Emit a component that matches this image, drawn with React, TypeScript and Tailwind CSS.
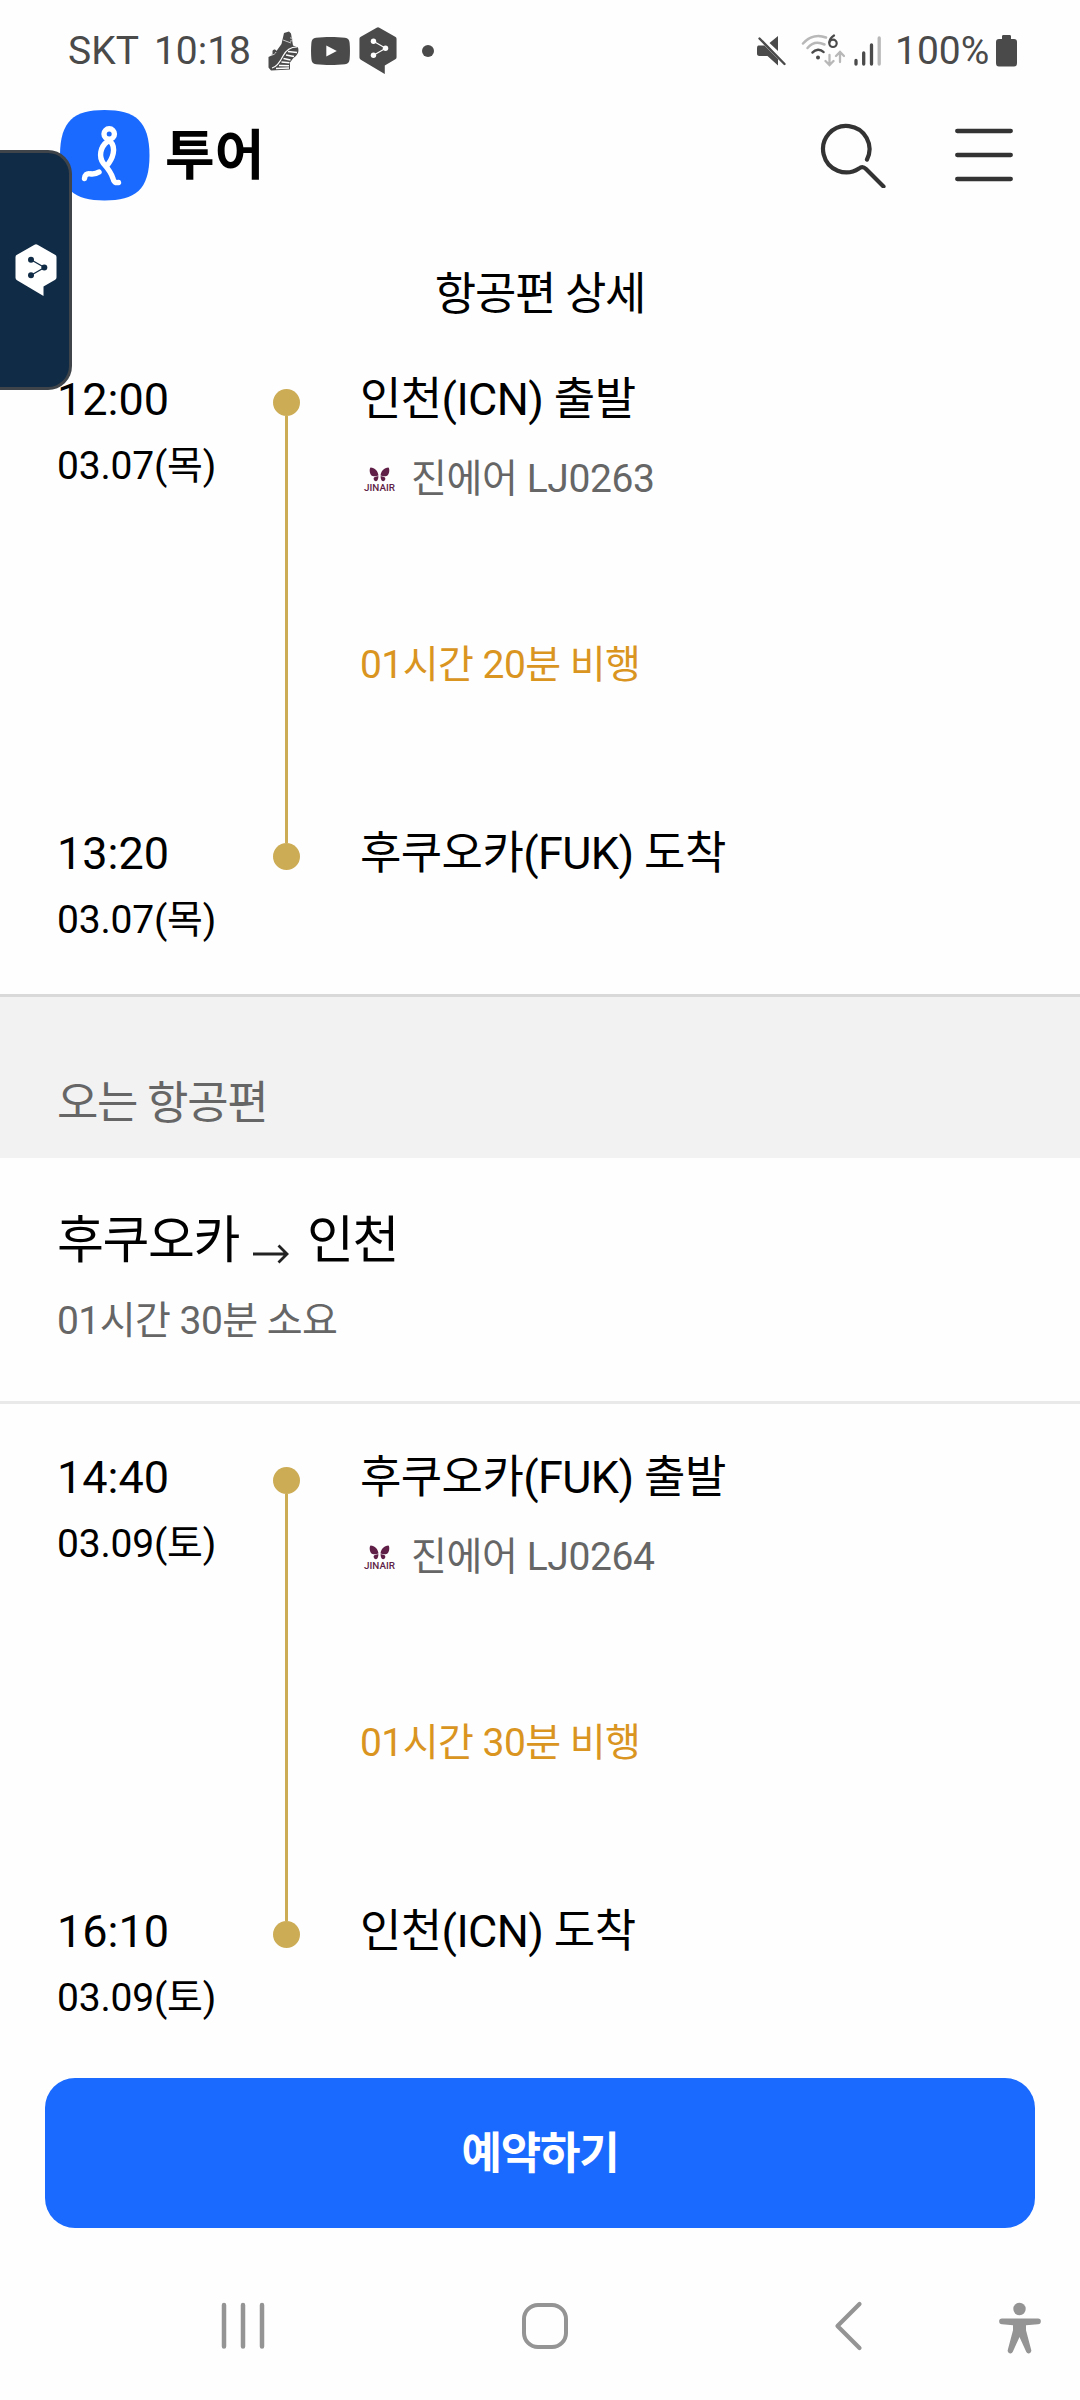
type Stop = {
  time: string;
  date: string;
  place: string;
};

type Leg = {
  departure: Stop;
  arrival: Stop;
  flight: string;
  duration: string;
};

const outbound: Leg = {
  departure: { time: "12:00", date: "03.07(목)", place: "인천(ICN) 출발" },
  arrival: { time: "13:20", date: "03.07(목)", place: "후쿠오카(FUK) 도착" },
  flight: "진에어 LJ0263",
  duration: "01시간 20분 비행",
};

const inbound: Leg = {
  departure: { time: "14:40", date: "03.09(토)", place: "후쿠오카(FUK) 출발" },
  arrival: { time: "16:10", date: "03.09(토)", place: "인천(ICN) 도착" },
  flight: "진에어 LJ0264",
  duration: "01시간 30분 비행",
};

function ShoeIcon() {
  return (
    <svg width="32" height="40" viewBox="0 0 32 40" fill="none">
      <path
        d="M16 2l5-1.500 2 2 1 6 1 6 5 2c1.500 5-1 8-5 11l-3 4v7L3 39.500l-2.500-3V26l4-2v-4c1-2 3-2 4 0l5-7z"
        fill="#4a4a4a"
      />
      <path
        d="M4 37c5-1 8-6 11-12s8-9 14-9"
        stroke="#fefefe"
        strokeWidth="1.200"
      />
      <path
        d="M20 20.500l9 1M18 24l8 1.500M15.500 27.500l7 1.500M13.500 31l8 .800M11 34.500l10 .3M8 37.500l13-.5"
        stroke="#fefefe"
        strokeWidth="1.600"
      />
      <path
        d="M15 9l8 3M3 24c3 0 4-1 5-3M22 7c3-1 3 4 0 3"
        stroke="#c9c9c9"
        strokeWidth="1"
      />
    </svg>
  );
}

function YoutubeIcon() {
  return (
    <svg width="39" height="28" viewBox="0 0 39 28">
      <path
        d="M5 .8C14-.2 25-.2 34 .8c3 .3 4.300 2 4.600 5 .5 5.500.5 11 0 16.500-.3 3-1.600 4.600-4.600 4.900-9 1-20 1-29 0-3-.3-4.300-1.900-4.600-4.900-.5-5.500-.5-11 0-16.500C.7 2.800 2 1.100 5 .8z"
        fill="#4a4a4a"
      />
      <path d="M15.300 8.500v11l10.500-5.500z" fill="#fefefe" />
    </svg>
  );
}

function DeeplIcon({ fill, ink, size }: { fill: string; ink: string; size: number }) {
  return (
    <svg width={size} height={(size * 52) / 42} viewBox="0 0 42 52">
      <path
        d="M19.500.8a3 3 0 0 1 3 0L40 10.800a2.500 2.500 0 0 1 1.500 2.200v20.500a2.500 2.500 0 0 1-1.300 2.200L28.500 42.500V52L2 36.200a3 3 0 0 1-1.500-2.500V13A2.500 2.500 0 0 1 2 10.800z"
        fill={fill}
      />
      <path d="M16 15.800l13.500 7.700L16 31.300" stroke={ink} strokeWidth="1.300" fill="none" />
      <circle cx="16" cy="15.800" r="3" fill={ink} />
      <circle cx="29.300" cy="23.500" r="3" fill={ink} />
      <circle cx="16" cy="31.300" r="3" fill={ink} />
    </svg>
  );
}

function MuteIcon() {
  return (
    <svg width="31" height="32" viewBox="0 0 31 32">
      <path
        d="M13.500 8L22 1v15zM2.500 10.500h6L22 24v6.500L11.500 21h-8C1.500 21 1 20 1 18.500v-5c0-2 .5-3 1.500-3z"
        fill="#4a4a4a"
      />
      <path d="M3.500 3.500L28.500 29" stroke="#4a4a4a" strokeWidth="2.400" strokeLinecap="round" />
    </svg>
  );
}

function WifiIcon() {
  return (
    <svg width="44" height="34" viewBox="0 0 44 34" fill="none" strokeLinecap="round">
      <path d="M2 9.500C9 1.500 18 .8 25 3.500" stroke="#b8b8b8" strokeWidth="2.500" />
      <path d="M6.500 14C11 8.500 17 7.500 23.500 10.500" stroke="#b8b8b8" strokeWidth="2.500" />
      <path d="M11.500 18.500c3-3.700 8-3.700 11-.5" stroke="#4a4a4a" strokeWidth="2.500" />
      <circle cx="17" cy="23.500" r="2" fill="#4a4a4a" />
      <path d="M33 1.500c-3 2-4.500 4.500-4.700 7" stroke="#4a4a4a" strokeWidth="2.200" />
      <circle cx="32" cy="9.300" r="3.700" stroke="#4a4a4a" strokeWidth="2.200" />
      <path
        d="M28.500 21v10m-4-4l4 4 4-4M39 28V18.500m-4 3.500l4-4 4 4"
        stroke="#b8b8b8"
        strokeWidth="2.300"
      />
    </svg>
  );
}

function SignalIcon() {
  return (
    <svg width="28" height="30" viewBox="0 0 28 30" strokeWidth="3.300" strokeLinecap="round">
      <path d="M2 24.500V28M9.700 17v11M17.500 9v19" stroke="#4a4a4a" />
      <path d="M25.200 2v26" stroke="#b8b8b8" />
    </svg>
  );
}

function StatusBar() {
  return (
    <div className="flex h-[101px] items-center pl-[68px] text-[39px] text-[#4a4a4a]">
      <span className="pt-px">SKT</span>
      <span className="ml-[15px] w-[114px] pt-px">10:18</span>
      <ShoeIcon />
      <span className="ml-[11px]">
        <YoutubeIcon />
      </span>
      <span className="ml-[9px]">
        <DeeplIcon fill="#4a4a4a" ink="#fefefe" size={38} />
      </span>
      <span className="ml-[25px] size-3 rounded-full bg-[#4a4a4a]" />
      <div className="ml-auto flex items-center pr-[63px]">
        <MuteIcon />
        <span className="ml-[14px]">
          <WifiIcon />
        </span>
        <span className="ml-[9px]">
          <SignalIcon />
        </span>
        <span className="ml-[13px] w-[101px] pt-px">100%</span>
        <svg width="21" height="32" viewBox="0 0 21 32" fill="#4a4a4a">
          <path d="M6 1.500C6 .5 6.500 0 7.500 0h6c1 0 1.500.5 1.500 1.500V4h3c2 0 3 1 3 3v21c0 2.500-1 3.500-3 3.500H3c-2 0-3-1-3-3.500V7c0-2 1-3 3-3h3z" />
        </svg>
      </div>
    </div>
  );
}

function Header() {
  return (
    <header className="flex h-[108px] items-center pr-[65px] pl-[60px]">
      <svg width="90" height="91" viewBox="0 0 90 91" fill="none">
        <path
          d="M44.500 0C75 0 89.500 11 89.500 45.500S75 90.500 44.500 90.500 0 80 0 45.500 14 0 44.500 0z"
          fill="#1a6aff"
        />
        <g stroke="#fff" strokeWidth="5.400" strokeLinecap="round" strokeLinejoin="round">
          <circle cx="49.200" cy="24" r="5.200" />
          <path d="M47.500 31.500C40 37 38.500 47 43.500 53.500C48 58.500 51 62 53 68.500Q54 73.500 58.500 72.500" />
          <path d="M50.500 31.500C56.500 38 53 49 46.500 56" />
          <path d="M24.500 68.500Q25 63 30 63.800Q35.500 64.500 39 62" />
        </g>
      </svg>
      <span className="ml-[15px] pt-[3px] text-[54px] font-bold">투어</span>
      <svg
        className="ml-auto"
        width="66"
        height="66"
        viewBox="0 0 66 66"
        fill="none"
        stroke="#333"
        strokeWidth="4.200"
        strokeLinecap="round"
        strokeLinejoin="round"
      >
        <path d="M47 37.500A23.200 23.200 0 1 0 39 46.500Q42.500 43.500 46 47L63.500 64.500" />
      </svg>
      <svg
        className="ml-[69px]"
        width="60"
        height="54"
        viewBox="0 0 60 54"
        stroke="#333"
        strokeWidth="4.300"
        strokeLinecap="round"
      >
        <path d="M2.200 3h53.600M2.200 27h53.600M2.200 51h53.600" />
      </svg>
    </header>
  );
}

function JinairLogo() {
  return (
    <svg width="33" height="26" viewBox="0 0 33 26" fill="#5f1f47">
      <path d="M15.500 9.500C15 5 12 2 7.500 1.500 6 3 6.500 9 9.500 10c2 .6 4 .3 6-.5zM17.500 9.500C18 5 21 2 25.500 1.500c1.500 1.500 1 7.500-2 8.500-2 .6-4 .3-6-.5z" />
      <path d="M15.500 10.300c-3 .2-5.500 1-4.700 3.200.5 1.800 2.500 2.200 3.500 1 .9-1.200 1-2.700 1.200-4.200zM17.500 10.300c3 .2 5.500 1 4.700 3.200-.5 1.800-2.500 2.200-3.500 1-.9-1.200-1-2.700-1.200-4.200z" />
      <text
        x="1"
        y="24.500"
        fontFamily="Roboto, sans-serif"
        fontSize="9.500"
        fontWeight="500"
        textLength="31"
        lengthAdjust="spacingAndGlyphs"
      >
        JINAIR
      </text>
    </svg>
  );
}

function StopTime({ stop }: { stop: Stop }) {
  return (
    <div>
      <div className="text-[45px] leading-[54px]">{stop.time}</div>
      <div className="mt-[15px] text-[39px] leading-[48px] tracking-[-0.2px]">{stop.date}</div>
    </div>
  );
}

function FlightLeg({ leg }: { leg: Leg }) {
  return (
    <div className="flex h-[572px] pl-[57px]">
      <div className="flex w-[216px] flex-col">
        <StopTime stop={leg.departure} />
        <div className="mt-[337px]">
          <StopTime stop={leg.arrival} />
        </div>
      </div>
      <div className="mt-4 flex h-[481px] w-[27px] flex-col items-center">
        <span className="size-[27px] shrink-0 rounded-full bg-[#ccac55]" />
        <span className="w-[3px] grow bg-[#ccac55]" />
        <span className="size-[27px] shrink-0 rounded-full bg-[#ccac55]" />
      </div>
      <div className="ml-[60px]">
        <div className="text-[45px] leading-[54px] tracking-[-0.6px]">{leg.departure.place}</div>
        <div className="mt-[28px] flex h-12 items-center text-[39px] leading-[48px] text-[#666]">
          <span className="ml-[3px]">
            <JinairLogo />
          </span>
          <span className="ml-[15px] tracking-[-0.4px]">{leg.flight}</span>
        </div>
        <div className="mt-[138px] text-[39px] leading-[48px] tracking-[-0.55px] text-[#d9951f]">
          {leg.duration}
        </div>
        <div className="mt-[138px] text-[45px] leading-[54px] tracking-[-0.6px]">
          {leg.arrival.place}
        </div>
      </div>
    </div>
  );
}

function NavBar() {
  return (
    <nav className="flex h-[172px] items-center pt-[24px] pl-[220px]">
      <svg width="46" height="48" viewBox="0 0 46 48" stroke="#949494" strokeWidth="4.500" strokeLinecap="round">
        <path d="M4 3v41.500M23 3v41.500M42 3v41.500" />
      </svg>
      <span className="ml-[256px] size-[46px] rounded-[16px] border-[4.500px] border-[#949494]" />
      <svg
        className="ml-[266px]"
        width="30"
        height="50"
        viewBox="0 0 30 50"
        fill="none"
        stroke="#949494"
        strokeWidth="4.200"
        strokeLinecap="round"
        strokeLinejoin="round"
      >
        <path d="M25.500 3L3.500 25l22 22" />
      </svg>
      <svg className="mt-[4px] ml-[135px]" width="42" height="52" viewBox="0 0 42 52" fill="#949494">
        <circle cx="20.500" cy="7" r="6.200" />
        <path d="M3 16.500h36a2.800 2.800 0 0 1 0 5.700l-12 1v5l5.300 20a2.700 2.700 0 0 1-5 1.800l-6.800-15-6.800 15a2.700 2.700 0 0 1-5-1.800l5.300-20v-5L3 22.200a2.800 2.800 0 0 1 0-5.700z" />
      </svg>
    </nav>
  );
}

export default function App() {
  return (
    <div className="relative flex h-[2400px] w-[1080px] flex-col overflow-hidden bg-[#fefefe] font-['Roboto','Noto_Sans_CJK_KR',sans-serif] text-black">
      <StatusBar />
      <Header />
      <h1 className="mt-[61px] mb-[53px] text-center text-[45px] leading-[50px] tracking-[-1.3px]">
        항공편 상세
      </h1>
      <FlightLeg leg={outbound} />

      <section className="mt-[49px] flex h-[164px] flex-col justify-end border-t-[3px] border-[#d9d9d9] bg-[#f2f2f2] pb-[27px] pl-[57px] text-[45px] leading-[54px] tracking-[-1.3px] text-[#666]">
        오는 항공편
      </section>
      <section className="h-[246px] border-b-[3px] border-[#e9e9e9] pt-[52px] pl-[57px]">
        <div className="flex h-[62px] items-center text-[51px] tracking-[-1.4px]">
          <span>후쿠오카</span>
          <svg
            className="mt-[26px] mr-[17px] ml-[13px]"
            width="38"
            height="20"
            viewBox="0 0 38 20"
            fill="none"
            stroke="#222"
            strokeWidth="2.800"
          >
            <path d="M1 10h34M26.500 1.500L35 10l-8.500 8.500" />
          </svg>
          <span>인천</span>
        </div>
        <div className="mt-[25px] text-[39px] leading-[48px] tracking-[-0.55px] text-[#666]">
          01시간 30분 소요
        </div>
      </section>
      <div className="mt-[47px]">
        <FlightLeg leg={inbound} />
      </div>

      <button className="mx-[45px] mt-[55px] h-[150px] shrink-0 rounded-[30px] bg-[#1a6aff] pt-[2px] text-[44px] font-bold tracking-[-1.2px] text-white">
        예약하기
      </button>
      <NavBar />

      {/* floating translate handle, sits over the page edge */}
      <div className="absolute top-[150px] left-0 flex h-60 w-[72px] items-center rounded-r-[24px] border-y-[3px] border-r-[3px] border-[#3e4449] bg-[#102b45] pl-[15px]">
        <DeeplIcon fill="#fff" ink="#102b45" size={42} />
      </div>
    </div>
  );
}
